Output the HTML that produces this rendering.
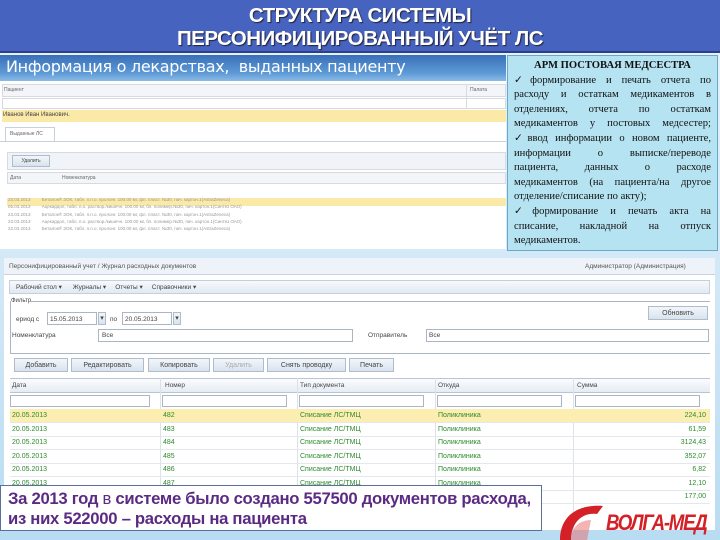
<!DOCTYPE html>
<html><head><meta charset="utf-8"><style>
*{margin:0;padding:0;box-sizing:border-box}
body{width:720px;height:540px;overflow:hidden;position:relative;font-family:"Liberation Sans",sans-serif;background:linear-gradient(#e8f4fc,#cfe6f6 60%,#b8dcf2)}
.a{position:absolute}
.hdr{left:0;top:0;width:720px;height:53px;background:#4763c0;border-bottom:2px solid #2c3f8a;color:#fff;text-align:center;font-weight:bold;font-size:20.5px;line-height:23px;padding-top:4px;letter-spacing:-0.5px;text-shadow:1px 1px 1px #223}
.sm{font-size:5px;color:#666}
.t{font-size:7px;color:#444;white-space:nowrap}
.btn{background:linear-gradient(#f2f6fb,#d9e3ee);border:1px solid #aebccc;font-size:7px;color:#444;text-align:center;line-height:13px}
.row{left:10px;width:700px;height:14px;border-bottom:1px solid #e4e8ec;font-size:7px;color:#2e8a2e;line-height:13px}
.row span{position:absolute;top:0}
.rb div{text-align:justify;text-align-last:justify;height:14.6px;overflow:hidden}
.rb div.l{text-align-last:left}
</style></head><body>
<div class="a hdr">СТРУКТУРА СИСТЕМЫ<br>ПЕРСОНИФИЦИРОВАННЫЙ УЧЁТ ЛС</div>

<div class="a" style="left:0;top:55px;width:506px;height:194px;background:#fff"></div>
<div class="a" style="left:0;top:55px;width:506px;height:26px;background:linear-gradient(#3a6fb8,#5d9ad6 70%,#8cbbe6);color:#fff;font-size:16px;line-height:24px;padding-left:6px;font-family:'DejaVu Sans',sans-serif;letter-spacing:-0.3px">Информация о лекарствах,&nbsp; выданных пациенту</div>
<div class="a" style="left:2px;top:84px;width:504px;height:13px;background:#f3f5f8;border:1px solid #d6dbe2"></div>
<div class="a sm" style="left:4px;top:87px">Пациент</div><div class="a sm" style="left:470px;top:87px">Палата</div>
<div class="a" style="left:466px;top:84px;width:1px;height:24px;background:#d6dbe2"></div>
<div class="a" style="left:2px;top:98px;width:504px;height:11px;border:1px solid #d6dbe2"></div>
<div class="a" style="left:2px;top:110px;width:504px;height:12px;background:#fbe9a8"></div>
<div class="a t" style="left:3px;top:112px;font-size:6px">Иванов Иван Иванович.</div>
<div class="a" style="left:5px;top:127px;width:50px;height:14px;border:1px solid #c8d0da;border-bottom:none;background:#fff"></div>
<div class="a sm" style="left:10px;top:131px">Выданные ЛС</div>
<div class="a" style="left:0;top:141px;width:506px;height:1px;background:#c8d0da"></div>
<div class="a" style="left:7px;top:152px;width:499px;height:18px;background:#f0f3f7;border:1px solid #d6dbe2"></div>
<div class="a btn" style="left:12px;top:155px;width:38px;height:12px;line-height:11px;font-size:5px">Удалить</div>
<div class="a" style="left:7px;top:172px;width:499px;height:12px;background:#f3f5f8;border:1px solid #d6dbe2"></div>
<div class="a sm" style="left:10px;top:175px">Дата</div><div class="a sm" style="left:62px;top:175px">Номенклатура</div>
<div class="a" style="left:7px;top:198px;width:499px;height:8px;background:#fbe9a8"></div>
<div class="a" style="left:8px;top:196px;font-size:4.5px;color:#999;line-height:7.3px;white-space:nowrap">23.03.2013 &nbsp;&nbsp;&nbsp;&nbsp;&nbsp;&nbsp;&nbsp; Беталок® ЗОК, табл. п.п.о. пролонг. 100.00 мг, фл. пласт. №30, пач. картон.1(AstraZeneca)<br>05.03.2013 &nbsp;&nbsp;&nbsp;&nbsp;&nbsp;&nbsp;&nbsp; Ацекардол, табл. п.о. раствор./кишечн. 100.00 мг, бл. полимер.№30, пач. картон.1(Синтез ОАО)<br>23.03.2013 &nbsp;&nbsp;&nbsp;&nbsp;&nbsp;&nbsp;&nbsp; Беталок® ЗОК, табл. п.п.о. пролонг. 100.00 мг, фл. пласт. №30, пач. картон.1(AstraZeneca)<br>23.03.2013 &nbsp;&nbsp;&nbsp;&nbsp;&nbsp;&nbsp;&nbsp; Ацекардол, табл. п.о. раствор./кишечн. 100.00 мг, бл. полимер.№30, пач. картон.1(Синтез ОАО)<br>22.03.2013 &nbsp;&nbsp;&nbsp;&nbsp;&nbsp;&nbsp;&nbsp; Беталок® ЗОК, табл. п.п.о. пролонг. 100.00 мг, фл. пласт. №30, пач. картон.1(AstraZeneca)</div>

<div class="a rb" style="left:507px;top:55px;width:211px;height:196px;background:#b5e3f2;border:1px solid #6aa7c8;padding:3px 6px 0 6px;font-family:'Liberation Serif',serif;font-size:10.6px;line-height:14.6px;color:#111;white-space:nowrap">
<div style="text-align:center;text-align-last:center;font-weight:bold">АРМ ПОСТОВАЯ МЕДСЕСТРА</div>
<div>✓формирование и печать отчета по</div>
<div>расходу и остаткам медикаментов в</div>
<div>отделениях, отчета по остаткам</div>
<div>медикаментов у постовых медсестер;</div>
<div>✓ввод информации о новом пациенте,</div>
<div>информации о выписке/переводе</div>
<div>пациента, данных о расходе</div>
<div>медикаментов (на пациента/на другое</div>
<div class="l">отделение/списание по акту);</div>
<div>✓формирование и печать акта на</div>
<div>списание, накладной на отпуск</div>
<div class="l">медикаментов.</div>
</div>

<div class="a" style="left:4px;top:258px;width:711px;height:272px;background:#fff"></div>
<div class="a" style="left:4px;top:258px;width:711px;height:17px;background:#eef3f9;border-bottom:1px solid #c9d3df"></div>
<div class="a t" style="left:9px;top:263px;font-size:6.5px;color:#555">Персонифицированный учет / Журнал расходных документов</div>
<div class="a t" style="left:585px;top:263px;font-size:6.5px;color:#555">Администратор (Администрация)</div>
<div class="a" style="left:9px;top:280px;width:701px;height:14px;background:linear-gradient(#f6f9fc,#e1e9f2);border:1px solid #c4cfdc"></div>
<div class="a t" style="left:16px;top:283px;font-size:6.5px">Рабочий стол ▾ &nbsp;&nbsp;&nbsp;&nbsp; Журналы ▾ &nbsp;&nbsp;&nbsp; Отчеты ▾ &nbsp;&nbsp;&nbsp; Справочники ▾</div>
<div class="a" style="left:10px;top:301px;width:700px;height:53px;border:1px solid #aab6c4;border-right:none"></div>
<div class="a t" style="left:11px;top:298px;background:#fff;font-size:6px">Фильтр</div>
<div class="a t" style="left:16px;top:316px;font-size:6.5px">ериод с</div>
<div class="a" style="left:47px;top:312px;width:50px;height:13px;border:1px solid #aab6c4"></div><div class="a t" style="left:50px;top:316px;font-size:6.5px">15.05.2013</div>
<div class="a btn" style="left:98px;top:312px;width:8px;height:13px;line-height:12px">▾</div>
<div class="a t" style="left:110px;top:316px;font-size:6.5px">по</div>
<div class="a" style="left:122px;top:312px;width:50px;height:13px;border:1px solid #aab6c4"></div><div class="a t" style="left:125px;top:316px;font-size:6.5px">20.05.2013</div>
<div class="a btn" style="left:173px;top:312px;width:8px;height:13px;line-height:12px">▾</div>
<div class="a t" style="left:12px;top:332px;font-size:6.5px">Номенклатура</div>
<div class="a" style="left:98px;top:329px;width:255px;height:13px;border:1px solid #aab6c4"></div><div class="a t" style="left:102px;top:332px;font-size:6.5px">Все</div>
<div class="a t" style="left:368px;top:332px;font-size:6.5px">Отправитель</div>
<div class="a" style="left:426px;top:329px;width:283px;height:13px;border:1px solid #aab6c4"></div><div class="a t" style="left:429px;top:332px;font-size:6.5px">Все</div>
<div class="a btn" style="left:648px;top:306px;width:60px;height:14px">Обновить</div>
<div class="a btn" style="left:14px;top:358px;width:54px;height:14px">Добавить</div>
<div class="a btn" style="left:71px;top:358px;width:73px;height:14px">Редактировать</div>
<div class="a btn" style="left:148px;top:358px;width:62px;height:14px">Копировать</div>
<div class="a btn" style="left:213px;top:358px;width:51px;height:14px;color:#aaa">Удалить</div>
<div class="a btn" style="left:267px;top:358px;width:79px;height:14px">Снять проводку</div>
<div class="a btn" style="left:349px;top:358px;width:45px;height:14px">Печать</div>
<div class="a" style="left:10px;top:378px;width:700px;height:15px;background:linear-gradient(#fbfcfe,#e6ecf3);border-top:1px solid #b9c5d2;border-bottom:1px solid #b9c5d2"></div>
<div class="a t" style="left:12px;top:382px;font-size:6.5px">Дата</div><div class="a t" style="left:165px;top:382px;font-size:6.5px">Номер</div><div class="a t" style="left:300px;top:382px;font-size:6.5px">Тип документа</div><div class="a t" style="left:438px;top:382px;font-size:6.5px">Откуда</div><div class="a t" style="left:577px;top:382px;font-size:6.5px">Сумма</div>
<div class="a" style="left:10px;top:395px;width:140px;height:12px;border:1px solid #aab6c4"></div>
<div class="a" style="left:162px;top:395px;width:125px;height:12px;border:1px solid #aab6c4"></div>
<div class="a" style="left:299px;top:395px;width:125px;height:12px;border:1px solid #aab6c4"></div>
<div class="a" style="left:437px;top:395px;width:125px;height:12px;border:1px solid #aab6c4"></div>
<div class="a" style="left:575px;top:395px;width:125px;height:12px;border:1px solid #aab6c4"></div>
<div class="a" style="left:160px;top:378px;width:1px;height:152px;background:#dde2e8"></div>
<div class="a" style="left:297px;top:378px;width:1px;height:152px;background:#dde2e8"></div>
<div class="a" style="left:435px;top:378px;width:1px;height:152px;background:#dde2e8"></div>
<div class="a" style="left:573px;top:378px;width:1px;height:152px;background:#dde2e8"></div>
<div class="a row" style="top:409px;background:#fbeeb0"><span style="left:2px">20.05.2013</span><span style="left:153px">482</span><span style="left:290px">Списание ЛС/ТМЦ</span><span style="left:428px">Поликлиника</span><span style="right:4px">224,10</span></div>
<div class="a row" style="top:423px"><span style="left:2px">20.05.2013</span><span style="left:153px">483</span><span style="left:290px">Списание ЛС/ТМЦ</span><span style="left:428px">Поликлиника</span><span style="right:4px">61,59</span></div>
<div class="a row" style="top:436px"><span style="left:2px">20.05.2013</span><span style="left:153px">484</span><span style="left:290px">Списание ЛС/ТМЦ</span><span style="left:428px">Поликлиника</span><span style="right:4px">3124,43</span></div>
<div class="a row" style="top:450px"><span style="left:2px">20.05.2013</span><span style="left:153px">485</span><span style="left:290px">Списание ЛС/ТМЦ</span><span style="left:428px">Поликлиника</span><span style="right:4px">352,07</span></div>
<div class="a row" style="top:463px"><span style="left:2px">20.05.2013</span><span style="left:153px">486</span><span style="left:290px">Списание ЛС/ТМЦ</span><span style="left:428px">Поликлиника</span><span style="right:4px">6,82</span></div>
<div class="a row" style="top:477px"><span style="left:2px">20.05.2013</span><span style="left:153px">487</span><span style="left:290px">Списание ЛС/ТМЦ</span><span style="left:428px">Поликлиника</span><span style="right:4px">12,10</span></div>
<div class="a row" style="top:490px"><span style="right:4px">177,00</span></div>

<div class="a" style="left:0;top:485px;width:542px;height:46px;background:#fff;border:1px solid #5a6f9a;padding:3px 0 0 7px;color:#5b2a82;font-size:16.7px;line-height:20px;font-weight:bold;letter-spacing:-0.3px;white-space:nowrap">За 2013 год <span style="font-weight:normal">в</span> системе было создано 557500 документов расхода,<br>из них 522000 – расходы на пациента</div>

<svg class="a" style="left:557px;top:500px" width="48" height="40" viewBox="0 0 48 40"><path d="M3 40 C3 18 18 4 46 6 L40 14 C24 12 14 24 14 40Z" fill="#d42027"/><path d="M14 40 C14 28 22 20 34 20 L30 40Z" fill="#e86a6a" opacity="0.5"/></svg>
<div class="a" style="left:606px;top:510px;color:#d42027;font-size:22px;font-weight:bold;font-style:italic;letter-spacing:-1.5px;white-space:nowrap;transform:scaleX(0.85);transform-origin:left">ВОЛГА-МЕД</div>
</body></html>
